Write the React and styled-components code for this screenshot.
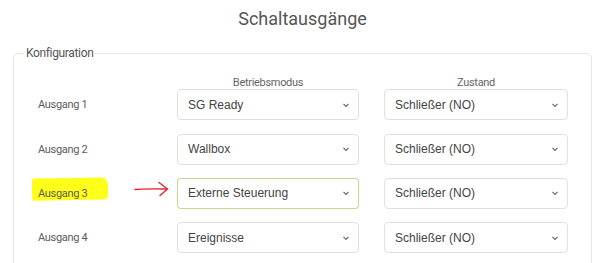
import styled, { createGlobalStyle } from "styled-components";

const GlobalStyle = createGlobalStyle`
   body {
      margin: 0;
      background: #ffffff;
      font-family: Roboto, "Liberation Sans", sans-serif;
   }
`;

const Page = styled.div`
   padding: 0 8px 0 13px;
`;

const Title = styled.h2`
   margin: 0;
   padding-top: 8px;
   font-size: 18px;
   line-height: 22px;
   font-weight: 400;
   color: #555;
   text-align: center;
`;

const Box = styled.fieldset`
   margin: 16px 0 0;
   padding: 15px 24px 20px;
   border: 1px solid #e6e6e6;
   border-radius: 5px;
   min-width: 0;
`;

const Legend = styled.legend`
   margin-left: -14px;
   padding: 0 2px;
   font-size: 12px;
   line-height: 15px;
   letter-spacing: -0.35px;
   color: #555;
`;

const Grid = styled.div`
   display: grid;
   grid-template-columns: 114px 182px 184px;
   column-gap: 25px;
   row-gap: 13.33px;
   align-items: center;
`;

const Head = styled.div`
   font-size: 11px;
   line-height: 14px;
   letter-spacing: -0.3px;
   color: #666;
   text-align: center;
   margin-bottom: -14px;
`;

const Label = styled.div`
   position: relative;
   font-size: 11px;
   letter-spacing: -0.3px;
   color: #5c5c5c;
`;

const LabelText = styled.span`
   position: relative;
   z-index: 1;
`;

const Marker = styled.span`
   position: absolute;
   left: -6px;
   top: -9px;
   width: 76px;
   height: 22px;
   background: #ffff1a;
   border-radius: 3px 6px 4px 2px / 4px 7px 5px 3px;
   transform: rotate(-1deg);
`;

const Arrow = styled.svg`
   position: absolute;
   right: -18px;
   top: -6px;
`;

const Select = styled.div`
   height: 31px;
   box-sizing: border-box;
   display: flex;
   align-items: center;
   justify-content: space-between;
   padding: 0 8px 0 10px;
   border: 1px solid ${(p) => (p.$active ? "#cdd596" : "#e0e0e0")};
   border-radius: 4px;
   background: #fff;
   box-shadow: ${(p) => (p.$active ? "0 0 1px rgba(190,200,110,0.5)" : "none")};
   font-family: "Liberation Sans", Arial, sans-serif;
   font-size: 12px;
   color: #444;
`;

const rows = [
   { label: "Ausgang 1", mode: "SG Ready" },
   { label: "Ausgang 2", mode: "Wallbox" },
   { label: "Ausgang 3", mode: "Externe Steuerung", marked: true },
   { label: "Ausgang 4", mode: "Ereignisse" },
];

function Chevron() {
   return (
      <svg width="8" height="6" viewBox="0 0 8 6">
         <path d="M1.5 1.8 L4 4.3 L6.5 1.8" fill="none" stroke="#666" strokeWidth="1.2" />
      </svg>
   );
}

function Dropdown({ value, active }) {
   return (
      <Select $active={active}>
         <span>{value}</span>
         <Chevron />
      </Select>
   );
}

export default function App() {
   return (
      <Page>
         <GlobalStyle />
         <Title>Schaltausgänge</Title>
         <Box>
            <Legend>Konfiguration</Legend>
            <Grid>
               <div />
               <Head>Betriebsmodus</Head>
               <Head>Zustand</Head>
               {rows.map((row) => (
                  <>
                     <Label key={row.label}>
                        {row.marked && <Marker />}
                        <LabelText>{row.label}</LabelText>
                        {row.marked && (
                           <Arrow width="36" height="16" viewBox="0 0 36 16">
                              <path
                                 d="M1 8.5 C10 7.5 22 7.8 33 8"
                                 fill="none"
                                 stroke="#e3242b"
                                 strokeWidth="1.4"
                                 strokeLinecap="round"
                              />
                              <path
                                 d="M25 1.5 L33.5 8 L26 14.5"
                                 fill="none"
                                 stroke="#e3242b"
                                 strokeWidth="1.4"
                                 strokeLinecap="round"
                                 strokeLinejoin="round"
                              />
                           </Arrow>
                        )}
                     </Label>
                     <Dropdown value={row.mode} active={row.marked} />
                     <Dropdown value="Schließer (NO)" />
                  </>
               ))}
            </Grid>
         </Box>
      </Page>
   );
}
